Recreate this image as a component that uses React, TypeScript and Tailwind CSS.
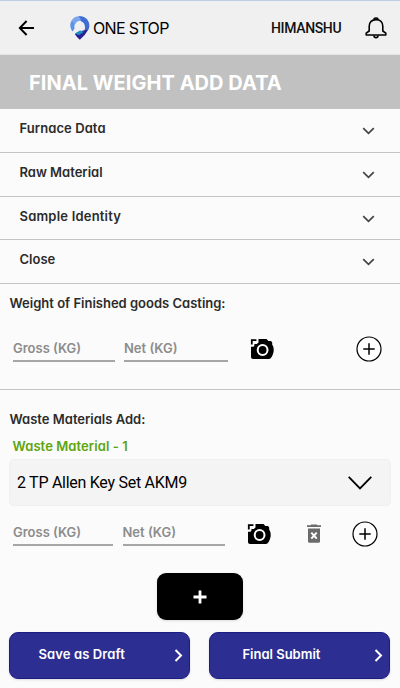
import { useState } from "react";

const panels = [
  { title: "Furnace Data", height: "h-11", tracking: "tracking-[0.08px]" },
  { title: "Raw Material", height: "h-[43.5px]", tracking: "tracking-[0]" },
  { title: "Sample Identity", height: "h-[43.5px]", tracking: "tracking-[0.2px]" },
  { title: "Close", height: "h-[44px]", tracking: "tracking-[0]" },
];

const actions = [
  { label: "Save as Draft", padding: "pl-[28px]", tracking: "tracking-[0.12px]" },
  { label: "Final Submit", padding: "pl-[32px]", tracking: "tracking-[0]" },
];

function Logo() {
  return (
    <svg width="20" height="24" viewBox="0 0 20 24" className="shrink-0">
      <path d="M2.6 15.4C-.6 11.6-.4 6.4 2.6 3.4L6.2 6.2C4.4 8.2 4 10.4 4.6 12.6Z" fill="#5a93ea" />
      <path d="M1.6 4.8C4-.2 11-1 15 2.4L13 5.4C9.4 4 6.6 5.4 5 8.4Z" fill="#7ba6ee" />
      <path d="M8.4.4C16.6-1 21.6 7.2 18.4 13.8L14.4 14.6C16 10.4 14.4 6 10.6 5C11.2 3.4 10.2 1.6 8.4.4Z" fill="#3f6dd2" />
      <path d="M4.8 18L9.5 15.4L14.2 14.2L18.3 13.6Q15.6 19 9.8 23.8Q6.8 21.4 4.8 18Z" fill="#2a1f97" />
      <path d="M5 17.6L10 14.6L14 15.8L9 19.2Z" fill="#1b8fc2" />
    </svg>
  );
}

function CameraIcon() {
  return (
    <svg width="24" height="22" viewBox="0 0 24 22" className="shrink-0">
      <path
        d="M8.5 1H16.5L18.4 3H21L22.2 4.6V6.8C23.8 8.4 24 12.6 23.4 14.5C22.5 18 21 21 19 21H3.2C1.8 21 1 20.2 1 18.8V8.8H3.4L4.4 7.8V6H6.8L8.5 4.4Z"
        fill="#000"
      />
      <path d="M1.8 6.6V2.2H6.4" fill="none" stroke="#000" strokeWidth="1.8" />
      <circle cx="12.6" cy="12" r="4.9" fill="none" stroke="#fff" strokeWidth="2" />
    </svg>
  );
}

function AddCircle() {
  return (
    <svg width="26" height="26" viewBox="0 0 26 26" fill="none" stroke="#000" className="shrink-0">
      <circle cx="13" cy="13" r="12" fill="#fff" strokeWidth="1.2" />
      <path d="M13 7.3V18.7M7.3 13H18.7" strokeWidth="1.5" />
    </svg>
  );
}

function TrashIcon() {
  return (
    <svg width="16" height="20" viewBox="0 0 16 20" className="shrink-0">
      <path d="M1 1.2H4.5L5.2.4H10.8L11.5 1.2H15V3H1Z" fill="#6b6b6b" />
      <path d="M2 4.6H14V17.2Q14 18.8 12.4 18.8H3.6Q2 18.8 2 17.2Z" fill="#6b6b6b" />
      <path d="M5.3 8.6L10.7 14.6M10.7 8.6L5.3 14.6" stroke="#fff" strokeWidth="2" />
    </svg>
  );
}

function WeightField({ label, className }: { label: string; className: string }) {
  return (
    <div className={`h-[25px] border-b-2 border-[#a6a6a6] text-[13px] leading-[23px] font-semibold whitespace-nowrap text-[#8c8c8c] ${className}`}>
      {label}
    </div>
  );
}

export default function App() {
  const [open, setOpen] = useState<string | null>(null);

  return (
    <div className="h-[688px] w-[400px] overflow-hidden bg-[#fbfbfb] font-['Inter','Liberation_Sans',sans-serif] text-[#2b2b2b] [font-feature-settings:'cv11']">
      <header className="flex h-[55px] items-center border-t border-b border-t-[#bfcce5] border-b-[#e4e4e4] bg-[#f0f0f0] pl-[18px]">
        <svg width="17" height="16" viewBox="0 0 17 16" fill="none" stroke="#000" strokeWidth="1.9">
          <path d="M16 8H2M8.6 1L1.8 8L8.6 15" />
        </svg>
        <div className="ml-[35px] flex w-[201px] items-center">
          <Logo />
          <span className="ml-[3px] text-[16px] tracking-[-0.65px] whitespace-nowrap text-black">ONE STOP</span>
        </div>
        <span className="w-[94px] pt-px font-['Roboto'] text-[14px] font-medium tracking-[-0.35px] text-[#111]">HIMANSHU</span>
        <svg width="22" height="22" viewBox="0 0 22 22" fill="none" stroke="#000" strokeWidth="1.6" strokeLinejoin="round">
          <path d="M4.2 14V9.2C4.2 5.2 7 2.6 11 2.6S17.8 5.2 17.8 9.2V14L20.8 16.2V18H1.2V16.2Z" />
          <path d="M9 2.6C9 .4 13 .4 13 2.6M8.8 18.4C9.2 21.4 12.8 21.4 13.2 18.4" />
        </svg>
      </header>

      <div className="flex h-[54px] items-center bg-[#c1c1c1] pt-px pl-[29px]">
        <h1 className="text-[20px] font-bold tracking-[0.04px] whitespace-nowrap text-white">FINAL WEIGHT ADD DATA</h1>
      </div>

      {panels.map((panel) => (
        <button
          key={panel.title}
          onClick={() => setOpen(open === panel.title ? null : panel.title)}
          className={`flex w-full justify-between border-b-[1.5px] border-[#c4c4c4] pr-[25px] pl-[19.5px] text-left ${panel.height}`}
        >
          <span className={`pt-[9px] text-[13px] leading-5 font-semibold ${panel.tracking}`}>{panel.title}</span>
          <svg width="13" height="8" viewBox="0 0 13 8" fill="none" stroke="#444" strokeWidth="1.7" className="mt-[18px]">
            <path d="M1.2 1.2L6.5 6.4L11.8 1.2" />
          </svg>
        </button>
      ))}

      <section className="h-[106px] border-b border-[#c4c4c4] pt-[9px]">
        <h2 className="pl-[9.5px] text-[13px] leading-5 font-semibold whitespace-nowrap">Weight of Finished goods Casting:</h2>
        <div className="mt-[23px] flex items-center pl-[13px]">
          <WeightField label="Gross (KG)" className="w-[102px]" />
          <WeightField label="Net (KG)" className="ml-[9px] w-[104px]" />
          <div className="mr-[82px] ml-[22px]">
            <CameraIcon />
          </div>
          <AddCircle />
        </div>
      </section>

      <section className="pt-[19px]">
        <h2 className="pl-[9.5px] text-[13px] leading-5 font-semibold whitespace-nowrap">Waste Materials Add:</h2>
        <h3 className="mt-[7px] pl-[12.5px] text-[13px] leading-5 font-semibold tracking-[0.08px] text-[#5ca50c]">Waste Material - 1</h3>
        <div className="mx-[9px] mt-[3px] flex h-[47px] items-center justify-between rounded-[5px] border border-[#f0f0f0] bg-[#f4f4f4] pr-[18px] pl-[7px]">
          <span className="font-['Roboto'] text-[16px] tracking-[-0.27px] text-black">2 TP Allen Key Set AKM9</span>
          <svg width="24" height="14" viewBox="0 0 24 14" fill="none" stroke="#000" strokeWidth="1.8">
            <path d="M.7 .8L12 12.5L23.3 .8" />
          </svg>
        </div>
        <div className="mt-[14.5px] flex items-center pl-[13px]">
          <WeightField label="Gross (KG)" className="w-[100px]" />
          <WeightField label="Net (KG)" className="ml-[9.5px] w-[102px]" />
          <div className="ml-[22.5px]">
            <CameraIcon />
          </div>
          <div className="mr-[30px] ml-[34.5px]">
            <TrashIcon />
          </div>
          <AddCircle />
        </div>
      </section>

      <div className="mt-[26.5px] flex justify-center">
        <button className="flex h-[47px] w-[86px] items-center justify-center rounded-[9px] bg-black shadow-sm">
          <svg width="14" height="14" viewBox="0 0 14 14" stroke="#fff" strokeWidth="2.8">
            <path d="M7 .5V13.5M.5 7H13.5" />
          </svg>
        </button>
      </div>

      <div className="mt-[11.6px] flex gap-[19px] pl-[9.4px]">
        {actions.map((action) => (
          <button
            key={action.label}
            className={`flex h-[47px] w-[181px] items-center justify-between rounded-[9px] border border-[#1d1b84] bg-[#2d2e91] pr-[6px] text-[13px] font-semibold text-white shadow-sm ${action.padding}`}
          >
            <span className={action.tracking}>{action.label}</span>
            <svg width="9" height="13" viewBox="0 0 9 13" fill="none" stroke="#fff" strokeWidth="2">
              <path d="M1.5 1L7 6.5L1.5 12" />
            </svg>
          </button>
        ))}
      </div>
    </div>
  );
}
